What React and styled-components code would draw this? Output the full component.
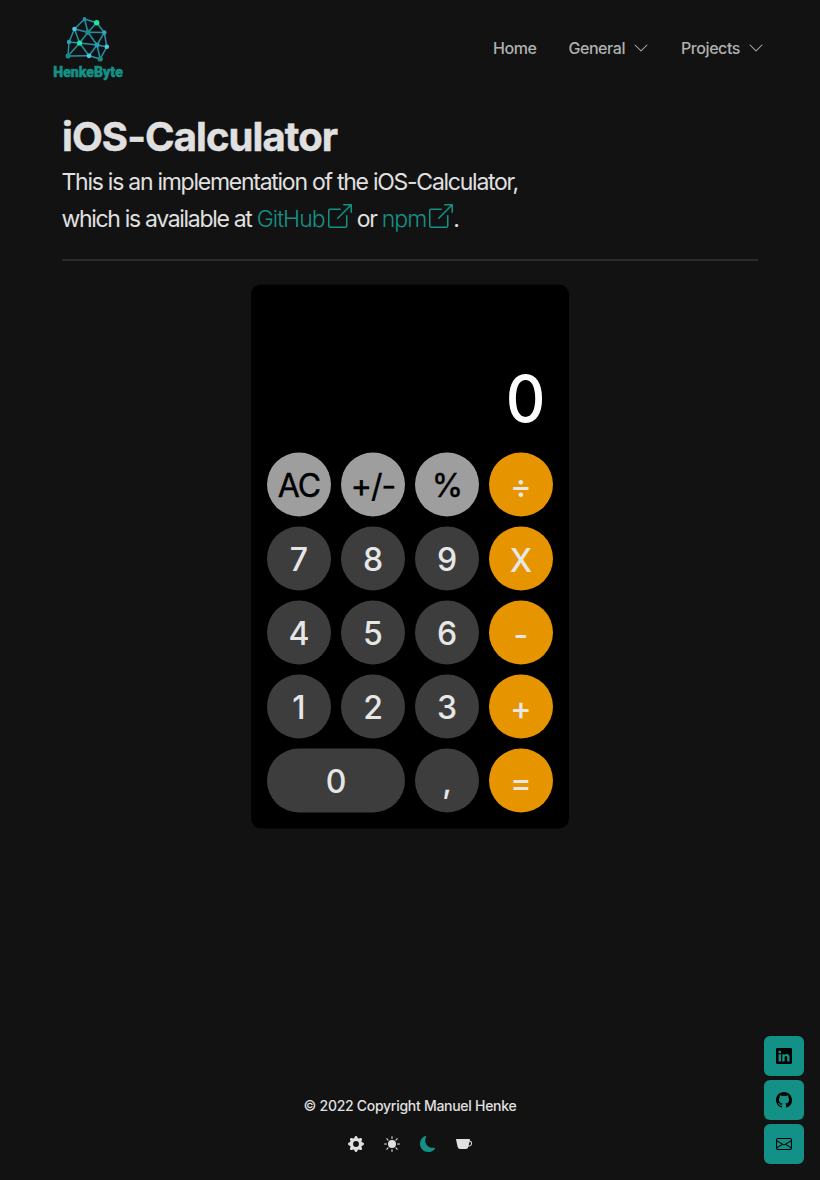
import React from "react";
import styled, { createGlobalStyle } from "styled-components";
import {
  BsBoxArrowUpRight,
  BsChevronDown,
  BsCupFill,
  BsEnvelope,
  BsGearFill,
  BsGithub,
  BsLinkedin,
  BsMoonFill,
  BsSunFill,
} from "react-icons/bs";

const GlobalStyle = createGlobalStyle`
  *, *::before, *::after { box-sizing: border-box; }
  body {
    margin: 0;
    background: #121212;
    color: #e0e0e0;
    font-family: Inter, "Liberation Sans", sans-serif;
    -webkit-font-smoothing: antialiased;
  }
`;

const Page = styled.div`
  display: flex;
  flex-direction: column;
  height: 1180px;
`;

const Header = styled.header`
  display: flex;
  align-items: center;
  justify-content: space-between;
  height: 96px;
  padding: 0 56px 0 48px;
`;

const LogoLink = styled.a`
  display: block;
  width: 80px;
  height: 80px;
  svg { display: block; }
`;

const Nav = styled.nav`
  display: flex;
  gap: 32px;
`;

const NavItem = styled.a`
  display: flex;
  align-items: center;
  gap: 8px;
  font-size: 16px;
  line-height: 24px;
  font-weight: 450;
  letter-spacing: -0.43px;
  color: #b0b0b0;
`;

const Main = styled.main`
  flex: 1;
  padding: 17px 62px 0;
`;

const Title = styled.h1`
  margin: 0;
  font-size: 40px;
  line-height: 48px;
  font-weight: 700;
  letter-spacing: -0.9px;
  -webkit-text-stroke: 0.5px currentColor;
`;

const Lead = styled.p`
  margin: 3px 0 0 -0.5px;
  font-size: 23px;
  line-height: 37px;
  font-weight: 400;
  letter-spacing: ${(p) => p.$spacing};
  & + & { margin-top: 0; }
`;

const ExternalLink = styled.a`
  color: #149186;
  font-weight: 300;
  letter-spacing: -0.97px;
  svg { width: 24px; height: 24px; margin-left: 3px; position: relative; top: 1px; }
`;

const Rule = styled.hr`
  margin: 21px 0 24px;
  border: 0;
  height: 2px;
  background: #2b2b2b;
`;

const Calculator = styled.section`
  width: 318px;
  height: 544px;
  margin: 0 auto;
  padding: 0 16px 16px;
  border-radius: 10px;
  background: #000;
  transform: translateY(-0.5px);
`;

const Display = styled.div`
  display: flex;
  align-items: flex-end;
  justify-content: flex-end;
  height: 168px;
  padding: 0 8px 14px 0;
  font-size: 64px;
  line-height: 80px;
  font-weight: 500;
  color: #fff;
  span { transform: scaleX(0.96); transform-origin: right; }
`;

const Keypad = styled.div`
  display: grid;
  grid-template-columns: repeat(4, 64px);
  grid-auto-rows: 64px;
  gap: 10px;
`;

const kinds = {
  digit: { background: "#3d3d3d", color: "#e6e6e6", weight: 460, spacing: "0" },
  action: { background: "#9e9e9e", color: "#000", weight: 400, spacing: "-1px" },
  operator: { background: "#e69500", color: "#e6e6e6", weight: 500, spacing: "0" },
};

const Key = styled.button`
  grid-column: span ${(p) => (p.$wide ? 2 : 1)};
  padding: ${(p) => (p.$kind === "operator" ? 3 : 1)}px 0 0;
  border: 0;
  border-radius: 32px;
  font: ${(p) => kinds[p.$kind].weight} 32px/48px Inter, "Liberation Sans", sans-serif;
  letter-spacing: ${(p) => kinds[p.$kind].spacing};
  background: ${(p) => kinds[p.$kind].background};
  color: ${(p) => kinds[p.$kind].color};
  -webkit-text-stroke: ${(p) => (p.$kind === "action" ? "0.4px currentColor" : "0")};
`;

const Footer = styled.footer`
  display: flex;
  flex-direction: column;
  align-items: center;
  gap: 20px;
  height: 85px;
`;

const Copyright = styled.div`
  font-size: 14px;
  line-height: 21px;
  font-weight: 450;
  letter-spacing: -0.28px;
`;

const Themes = styled.div`
  display: flex;
  gap: 20px;
`;

const ThemeButton = styled.button`
  display: flex;
  padding: 0;
  border: 0;
  background: none;
  font-size: 16px;
  color: ${(p) => (p.$active ? "#149186" : "#e0e0e0")};
`;

const Socials = styled.aside`
  position: fixed;
  right: 16px;
  bottom: 16px;
  display: flex;
  flex-direction: column;
  gap: 4px;
`;

const SocialLink = styled.a`
  display: flex;
  align-items: center;
  justify-content: center;
  width: 40px;
  height: 40px;
  border-radius: 6px;
  background: #149186;
  color: #000;
  font-size: 16px;
`;

const points = [
  [36.5, 11, "#2693a8", 1.9], [48.7, 14.7, "#20e6a0", 2.7],
  [26.5, 21, "#4bc8dc", 2.3], [40, 24.2, "#178d8c", 2.7],
  [56.3, 24.5, "#35a3b8", 2.2], [21, 34, "#2f9fb8", 2.2],
  [31.6, 35, "#20e69a", 2.6], [49, 37, "#2b9cb8", 2.5],
  [58.8, 38.8, "#4bc8dc", 2.3], [20, 48, "#178d84", 2.5],
  [41, 47.8, "#4bc8dc", 2.4], [52.2, 51, "#178d84", 2.6],
];

const edges = [
  [0, 1], [0, 2], [0, 3], [1, 3], [1, 4], [2, 3], [2, 5], [2, 6],
  [3, 4], [3, 6], [3, 7], [4, 7], [4, 8], [5, 6], [5, 9], [6, 9],
  [6, 7], [6, 10], [7, 8], [7, 10], [7, 11], [8, 11], [9, 10], [10, 11],
];

function Logo() {
  return (
    <svg width="80" height="80" viewBox="0 0 80 80">
      <g stroke="#2490a8" strokeWidth="1.5">
        {edges.map(([a, b]) => (
          <line key={`${a}-${b}`} x1={points[a][0]} y1={points[a][1]} x2={points[b][0]} y2={points[b][1]} />
        ))}
      </g>
      {points.map(([x, y, fill, r]) => (
        <circle key={`${x}-${y}`} cx={x} cy={y} r={r} fill={fill} />
      ))}
      <text
        x="5.3" y="69" textLength="69.5" lengthAdjust="spacingAndGlyphs"
        fontFamily="Roboto, sans-serif" fontWeight="900" fontSize="14.2"
        fill="#149186" stroke="#149186" strokeWidth="0.5"
      >
        HenkeByte
      </text>
    </svg>
  );
}

const keys = [
  ["AC", "action"], ["+/-", "action"], ["%", "action"], ["÷", "operator"],
  ["7", "digit"], ["8", "digit"], ["9", "digit"], ["X", "operator"],
  ["4", "digit"], ["5", "digit"], ["6", "digit"], ["-", "operator"],
  ["1", "digit"], ["2", "digit"], ["3", "digit"], ["+", "operator"],
  ["0", "digit", true], [",", "digit"], ["=", "operator"],
];

export default function App() {
  return (
    <Page>
      <GlobalStyle />
      <Header>
        <LogoLink><Logo /></LogoLink>
        <Nav>
          <NavItem>Home</NavItem>
          <NavItem>General <BsChevronDown /></NavItem>
          <NavItem>Projects <BsChevronDown /></NavItem>
        </Nav>
      </Header>
      <Main>
        <Title>iOS-Calculator</Title>
        <Lead $spacing="-1.26px">This is an implementation of the iOS-Calculator,</Lead>
        <Lead $spacing="-1.32px">
          which is available at <ExternalLink>GitHub<BsBoxArrowUpRight /></ExternalLink> or{" "}
          <ExternalLink>npm<BsBoxArrowUpRight /></ExternalLink>.
        </Lead>
        <Rule />
        <Calculator>
          <Display><span>0</span></Display>
          <Keypad>
            {keys.map(([label, kind, wide]) => (
              <Key key={label} $kind={kind} $wide={wide}>{label}</Key>
            ))}
          </Keypad>
        </Calculator>
      </Main>
      <Footer>
        <Copyright>© 2022 Copyright Manuel Henke</Copyright>
        <Themes>
          <ThemeButton><BsGearFill /></ThemeButton>
          <ThemeButton><BsSunFill /></ThemeButton>
          <ThemeButton $active><BsMoonFill /></ThemeButton>
          <ThemeButton><BsCupFill /></ThemeButton>
        </Themes>
      </Footer>
      <Socials>
        <SocialLink><BsLinkedin /></SocialLink>
        <SocialLink><BsGithub /></SocialLink>
        <SocialLink><BsEnvelope /></SocialLink>
      </Socials>
    </Page>
  );
}
